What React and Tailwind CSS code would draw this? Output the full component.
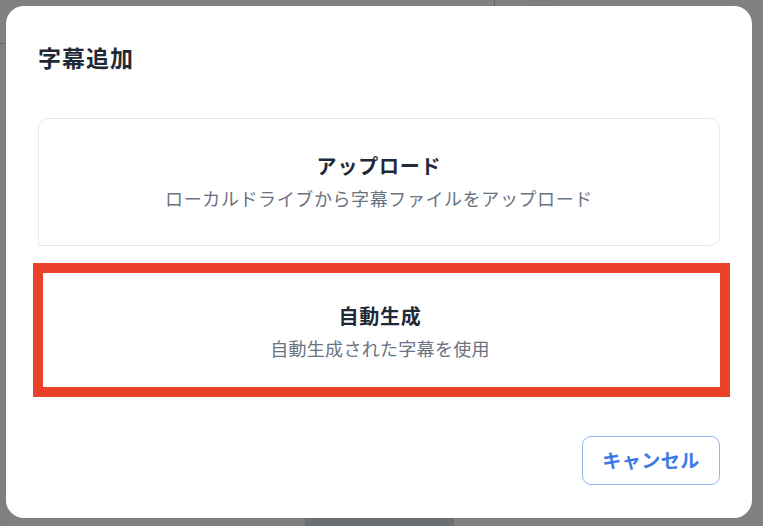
export default function App() {
  const jp = { fontFamily: '"Noto Sans CJK JP", "Noto Sans", sans-serif' };
  return (
    <div className="relative w-[763px] h-[526px] bg-[#808080] overflow-hidden" style={jp}>
      {/* faint backdrop content */}
      <div className="absolute left-[494px] top-0 w-px h-[6px] bg-[#5e6166]" />
      <div className="absolute left-[528px] top-0 w-[31px] h-[6px] bg-[#7c7d7f]" />
      <div className="absolute left-0 top-[43px] w-[6px] h-px bg-[#6a6d71]" />
      <div className="absolute left-0 top-[118px] w-[6px] h-[408px] bg-[#7e7f81]" />
      <div className="absolute left-[202px] top-[518px] w-[103px] h-[8px] bg-[#7d7e80]" />
      <div className="absolute left-[305px] top-[518px] w-[149px] h-[8px] bg-[#6b6e72]" />

      <div className="relative pt-[6px] pl-[6px]">
        <div className="w-[746px] h-[512px] bg-white rounded-[18px] flex flex-col px-[32px] pt-[35px]">
          <h2 className="text-[23px] leading-[32px] font-bold text-[#1f2937] tracking-[1px]">字幕追加</h2>

          <div className="mt-[45px] h-[128px] border border-[#e5e7eb] rounded-[10px] rounded-bl-none flex flex-col items-center justify-center gap-[4px]">
            <div className="text-[20px] leading-[28px] font-bold text-[#1f2937] tracking-[0.8px]">アップロード</div>
            <div className="text-[18px] leading-[28px] text-[#6b7280] tracking-[0.6px]">ローカルドライブから字幕ファイルをアップロード</div>
          </div>

          <div className="mt-[17px] ml-[-5px] mr-[-10px] h-[134px] border-[10px] border-[#e9412a] bg-white flex flex-col items-center justify-center gap-[4px] pt-[4px] pr-[3px]">
            <div className="text-[20px] leading-[28px] font-bold text-[#1f2937] tracking-[0.8px]">自動生成</div>
            <div className="text-[18px] leading-[28px] text-[#6b7280] tracking-[0.3px]">自動生成された字幕を使用</div>
          </div>

          <div className="mt-[39px] flex justify-end">
            <button className="w-[138px] h-[49px] rounded-[9px] border border-[#93b6f4] text-[#3a7ae6] text-[19px] font-bold tracking-[0.5px] flex items-center justify-center">
              キャンセル
            </button>
          </div>
        </div>
      </div>
    </div>
  );
}
